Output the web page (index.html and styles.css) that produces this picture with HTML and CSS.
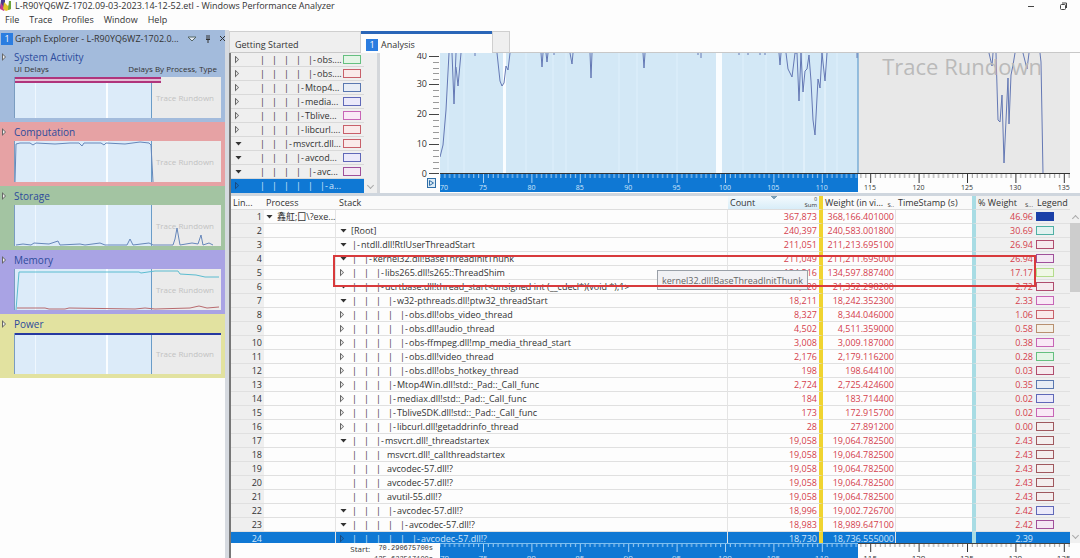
FILE: index.html
```html
<!DOCTYPE html>
<html lang="en">
<head>
<meta charset="utf-8">
<title>Windows Performance Analyzer</title>
<link rel="stylesheet" href="styles.css">
</head>
<body>
<header class="titlebar">
  <svg class="logo" width="12" height="12" viewBox="0 0 12 12"><path d="M1 0h4v8H0z" fill="#4a3a8c"/><path d="M1 3l4 6-1 2-4-2z" fill="#c43a8e"/><path d="M4 2l4 4 3-4v7l-5 2-3-2z" fill="#e2c52c"/><path d="M9 1h2v8l-3 1z" fill="#6fa53a"/></svg>
  <h1>L-R90YQ6WZ-1702.09-03-2023.14-12-52.etl - Windows Performance Analyzer</h1>
  <button class="win" aria-label="Minimize"><svg width="8" height="8" viewBox="0 0 8 8"><path d="M1 4.500h6" stroke="#444"/></svg></button>
  <button class="win" aria-label="Restore"><svg width="9" height="9" viewBox="0 0 9 9" fill="none" stroke="#444"><rect x="1.500" y="2.500" width="5" height="5" rx="1"/><path d="M3 1h4.500v5"/></svg></button>
</header>
<nav class="menu"><button>File</button><button>Trace</button><button>Profiles</button><button>Window</button><button>Help</button></nav>
<main>
  <aside>
    <div class="explorer">
      <div class="panel-head"><b class="num">1</b><span class="name">Graph Explorer - L-R90YQ6WZ-1702.0...</span>
        <button aria-label="Menu"><svg width="10" height="6" viewBox="0 0 10 6"><path d="M1 1h8L5 5z" fill="#e4eaf2" stroke="#566"/></svg></button>
        <button aria-label="Pin"><svg width="6" height="8" viewBox="0 0 6 8" stroke="#333" fill="none"><path d="M2 0v4M4 0v4M1 4.500h4M3 5v3"/></svg></button>
        <button aria-label="Close"><svg width="7" height="7" viewBox="0 0 7 7"><path d="M1 1l5 5M6 1L1 6" stroke="#333"/></svg></button>
      </div>
      <section class="system">
        <h2><button class="tw" aria-label="Expand"></button>System Activity</h2>
        <p class="sub"><span>UI Delays</span><span>Delays By Process, Type</span></p>
        <div class="thumb"><span>Trace Rundown</span>
          <svg viewBox="0 0 206 41" preserveAspectRatio="none"><path d="M0 0h146v6H0z" fill="#e3bcd4" stroke="none"/><path d="M0 1h146M0 5h146" stroke="#b0347c" stroke-width="2"/></svg></div>
      </section>
      <section class="computation">
        <h2><button class="tw" aria-label="Expand"></button>Computation</h2>
        <div class="thumb"><span>Trace Rundown</span>
          <svg viewBox="0 0 206 41" preserveAspectRatio="none"><path d="M0 41L1 3L5 2L15 2L18 4L21 2L40 3L55 2L64 2L67 5L69 2L86 2L89 4L91 2L110 3L125 1L134 2L136 4L138 41"/></svg></div>
      </section>
      <section class="storage">
        <h2><button class="tw" aria-label="Expand"></button>Storage</h2>
        <div class="thumb"><span>Trace Rundown</span>
          <svg viewBox="0 0 206 41" preserveAspectRatio="none"><path d="M1 40L8 39L16 40L19 38L34 39L43 36L45 40L65 39L70 40L85 38L90 40L112 40L115 34L118 40L134 38L138 40L158 40L160 34L162 23L165 40L177 38L183 39L186 30L188 40L194 38L198 40"/></svg></div>
      </section>
      <section class="memory">
        <h2><button class="tw" aria-label="Expand"></button>Memory</h2>
        <div class="thumb"><span>Trace Rundown</span>
          <svg viewBox="0 0 206 41" preserveAspectRatio="none"><path d="M1 41L4 3L124 3L126 4L140 2L163 2L165 5L181 6L190 8L204 8" stroke="#5bbcd0"/><path d="M2 39L30 39L34 40L50 40L54 39L120 40L130 39L140 40L175 39L184 37L192 39L204 38" stroke="#b86a6e"/></svg></div>
      </section>
      <section class="power">
        <h2><button class="tw" aria-label="Expand"></button>Power</h2>
        <div class="thumb"><span>Trace Rundown</span>
          <svg viewBox="0 0 206 41" preserveAspectRatio="none"><path d="M0 1h206" stroke="#2638a0" stroke-width="2"/></svg></div>
      </section>
    </div>
  </aside>
  <div class="workspace">
    <div class="tabs" role="tablist"><button role="tab">Getting Started</button><button role="tab" class="active"><b class="num">1</b>Analysis</button><button role="tab" class="stub" aria-label="New tab"></button></div>
    <div class="view">
      <div class="graph">
        <ul class="tree">
          <li><button class="tw" aria-label="Expand"></button><span class="st"><i>|</i><i>|</i><i>|</i><i>|</i><em>|-</em>obs....</span><span class="sw green"></span></li>
          <li><button class="tw" aria-label="Expand"></button><span class="st"><i>|</i><i>|</i><i>|</i><i>|</i><em>|-</em>obs....</span><span class="sw red"></span></li>
          <li><button class="tw" aria-label="Expand"></button><span class="st"><i>|</i><i>|</i><i>|</i><em>|-</em>Mtop4...</span><span class="sw blue"></span></li>
          <li><button class="tw" aria-label="Expand"></button><span class="st"><i>|</i><i>|</i><i>|</i><em>|-</em>media...</span><span class="sw indigo"></span></li>
          <li><button class="tw" aria-label="Expand"></button><span class="st"><i>|</i><i>|</i><i>|</i><em>|-</em>Tblive...</span><span class="sw pink"></span></li>
          <li><button class="tw" aria-label="Expand"></button><span class="st"><i>|</i><i>|</i><i>|</i><em>|-</em>libcurl....</span><span class="sw red"></span></li>
          <li><button class="tw open" aria-label="Collapse"></button><span class="st"><i>|</i><i>|</i><em>|-</em>msvcrt.dll...</span><span class="sw red"></span></li>
          <li><button class="tw open" aria-label="Collapse"></button><span class="st"><i>|</i><i>|</i><i>|</i><em>|-</em>avcod...</span><span class="sw indigo"></span></li>
          <li><button class="tw open" aria-label="Collapse"></button><span class="st"><i>|</i><i>|</i><i>|</i><i>|</i><em>|-</em>avc...</span><span class="sw purple"></span></li>
          <li class="sel"><button class="tw" aria-label="Expand"></button><span class="st"><i>|</i><i>|</i><i>|</i><i>|</i><i>|</i><em>|-</em>a...</span><span class="sw none"></span></li>
        </ul>
        <div class="tree-scroll"><span class="chev down"></span></div>
        <div class="chart">
          <div class="axis">
            <div class="labels"><span>40</span><span>30</span><span>20</span><span>10</span><span>0</span></div>
            <svg width="11" height="121" viewBox="0 0 11 121"><path d="M0 3.500h10M0 31.500h10M0 61.500h10M0 91.500h10M0 120.500h10" stroke="#444"/><path d="M4 9.500h6M4 15.500h6M4 20.500h6M4 26.500h6M4 37.500h6M4 43.500h6M4 49.500h6M4 55.500h6M4 67.500h6M4 73.500h6M4 79.500h6M4 85.500h6M4 97.500h6M4 103.500h6M4 109.500h6M4 115.500h6" stroke="#999"/></svg>
            <button class="zoomer" aria-label="Zoom"><svg width="9" height="10" viewBox="0 0 9 10" fill="none" stroke="#2f6ea8"><rect x=".5" y=".5" width="8" height="9" fill="#dcebf5"/><path d="M2.500 2.500l4 2.500-4 2.500z"/></svg></button>
          </div>
          <div class="plot-col">
            <div class="plot">
              <svg viewBox="0 0 630 121" preserveAspectRatio="none">
                <rect width="418" height="121" fill="#d3e8f6"/>
                <path d="M8 0v121M24 0v121M86 0v121M113 0v121M126 0v121M179 0v121M197 0v121M237 0v121M303 0v121M326 0v121M343 0v121M397 0v121" stroke="#d9ecf9" stroke-width="2"/>
                <path d="M364 0v121M385 0v121" stroke="#edf7fe"/>
                <path d="M63 0h3v121h-3zM276 0h6v121h-6z" fill="#fafdff"/>
                <rect x="418" width="212" height="121" fill="#e8e8e8"/>
                <path d="M418 0v121" stroke="#4a90c8"/>
                <path class="line" d="M0 104L3 92L6 57L9 0M12 0L14 51L16 0M16 14L18 33L21 0M35 0v3M57 0L60 28L62 33L64 30L66 13L68 17L70 0M101 0l1 14l1-14M106 0l1 9l1-9M114 0v2M130 0l2 11l1-11M150 0l1 25l1-25M203 0l1 15l1-15M258 0v2M261 0v5M299 0v2M308 0v2M320 0v2M325 0v2M339 0l1 12l1-12M346 0L348 16L352 24L355 0L357 0L359 48L361 0L363 39L365 18L367 16L369 2L371 28L373 67L375 82L378 26L380 35L382 0L385 28L387 0M417 0v5M549 0L552 13L553 0M556 0L558 67L560 69L562 42L564 110L568 25L569 71L571 22L573 12L575 0M583 0L587 16L589 0M600 0L601 9L603 121"/>
                <path d="M0 120.500h630" stroke="#333"/>
              </svg>
              <span class="rundown">Trace Rundown</span>
            </div>
            <div class="ruler">
              <svg viewBox="0 0 630 18" preserveAspectRatio="none"><defs><pattern id="tickw" x="43" width="48.400" height="18" patternUnits="userSpaceOnUse"><path d="M.5 0v9M5.300 0v4M10.200 0v4M15 0v4M19.900 0v4M24.700 0v4M29.500 0v4M34.400 0v4M39.200 0v4M44.100 0v4" stroke="#a9d2f5"/></pattern><pattern id="tickd" x="43" width="48.400" height="18" patternUnits="userSpaceOnUse"><path d="M.5 0v9" stroke="#333"/><path d="M5.300 0v4M10.200 0v4M15 0v4M19.900 0v4M24.700 0v4M29.500 0v4M34.400 0v4M39.200 0v4M44.100 0v4" stroke="#999"/></pattern></defs><rect class="bg" width="418" height="18"/><rect width="418" height="18" fill="url(#tickw)"/><rect x="418" width="212" height="18" fill="url(#tickd)"/></svg>
              <div class="scale"><span class="first">70</span><span>75</span><span>80</span><span>85</span><span>90</span><span>95</span><span>100</span><span>105</span><span>110</span><span class="out">115</span><span class="out">120</span><span class="out">125</span><span class="out">130</span><span class="out">135</span></div>
            </div>
          </div>
          <div class="gutter"></div>
        </div>
      </div>
      <div class="grid-wrap">
        <table>
          <colgroup><col class="c-line"><col class="c-proc"><col><col class="c-count"><col class="c-weight"><col class="c-time"><col class="c-pct"><col class="c-leg"></colgroup>
          <thead><tr><th>Lin...</th><th>Process</th><th>Stack</th><th class="sorted"><div class="hd">Count<small class="agg"><span>0</span><span>Sum</span></small></div></th><th><div class="hd">Weight (in vi...<small>S..</small></div></th><th>TimeStamp (s)</th><th><div class="hd">% Weight<small>S...</small></div></th><th>Legend</th></tr></thead>
          <tbody>
          <tr><td>1</td><td><div class="st"><button class="tw open" aria-label="Collapse"></button>鑫舡;囗\?exe...</div></td><td></td><td>367,873</td><td>368,166.401000</td><td></td><td>46.96</td><td><span class="sw solid"></span></td></tr>
          <tr><td>2</td><td></td><td><div class="st"><button class="tw open" aria-label="Collapse"></button>[Root]</div></td><td>240,397</td><td>240,583.001800</td><td></td><td>30.69</td><td><span class="sw teal"></span></td></tr>
          <tr><td>3</td><td></td><td><div class="st"><button class="tw open" aria-label="Collapse"></button><em>|-</em>ntdll.dll!RtlUserThreadStart</div></td><td>211,051</td><td>211,213.695100</td><td></td><td>26.94</td><td><span class="sw rose"></span></td></tr>
          <tr><td>4</td><td></td><td><div class="st"><button class="tw open" aria-label="Collapse"></button><i>|</i><em>|-</em>kernel32.dll!BaseThreadInitThunk</div></td><td>211,049</td><td>211,211.695000</td><td></td><td>26.94</td><td><span class="sw purple"></span></td></tr>
          <tr><td>5</td><td></td><td><div class="st"><button class="tw" aria-label="Expand"></button><i>|</i><i>|</i><em>|-</em>libs265.dll!s265::ThreadShim</div></td><td>134,516</td><td>134,597.887400</td><td></td><td>17.17</td><td><span class="sw lime"></span></td></tr>
          <tr><td>6</td><td></td><td><div class="st"><button class="tw open" aria-label="Collapse"></button><i>|</i><i>|</i><em>|-</em>ucrtbase.dll!thread_start&lt;unsigned int (__cdecl*)(void *),1&gt;</div></td><td>21,320</td><td>21,352.298200</td><td></td><td>2.72</td><td><span class="sw rose"></span></td></tr>
          <tr><td>7</td><td></td><td><div class="st"><button class="tw open" aria-label="Collapse"></button><i>|</i><i>|</i><i>|</i><em>|-</em>w32-pthreads.dll!ptw32_threadStart</div></td><td>18,211</td><td>18,242.352300</td><td></td><td>2.33</td><td><span class="sw pink"></span></td></tr>
          <tr><td>8</td><td></td><td><div class="st"><button class="tw" aria-label="Expand"></button><i>|</i><i>|</i><i>|</i><i>|</i><em>|-</em>obs.dll!obs_video_thread</div></td><td>8,327</td><td>8,344.046000</td><td></td><td>1.06</td><td><span class="sw red"></span></td></tr>
          <tr><td>9</td><td></td><td><div class="st"><button class="tw" aria-label="Expand"></button><i>|</i><i>|</i><i>|</i><i>|</i><em>|-</em>obs.dll!audio_thread</div></td><td>4,502</td><td>4,511.359000</td><td></td><td>0.58</td><td><span class="sw tan"></span></td></tr>
          <tr><td>10</td><td></td><td><div class="st"><button class="tw" aria-label="Expand"></button><i>|</i><i>|</i><i>|</i><i>|</i><em>|-</em>obs-ffmpeg.dll!mp_media_thread_start</div></td><td>3,008</td><td>3,009.187000</td><td></td><td>0.38</td><td><span class="sw pink"></span></td></tr>
          <tr><td>11</td><td></td><td><div class="st"><button class="tw" aria-label="Expand"></button><i>|</i><i>|</i><i>|</i><i>|</i><em>|-</em>obs.dll!video_thread</div></td><td>2,176</td><td>2,179.116200</td><td></td><td>0.28</td><td><span class="sw green"></span></td></tr>
          <tr><td>12</td><td></td><td><div class="st"><button class="tw" aria-label="Expand"></button><i>|</i><i>|</i><i>|</i><i>|</i><em>|-</em>obs.dll!obs_hotkey_thread</div></td><td>198</td><td>198.644100</td><td></td><td>0.03</td><td><span class="sw rose"></span></td></tr>
          <tr><td>13</td><td></td><td><div class="st"><button class="tw" aria-label="Expand"></button><i>|</i><i>|</i><i>|</i><em>|-</em>Mtop4Win.dll!std::_Pad::_Call_func</div></td><td>2,724</td><td>2,725.424600</td><td></td><td>0.35</td><td><span class="sw blue"></span></td></tr>
          <tr><td>14</td><td></td><td><div class="st"><button class="tw" aria-label="Expand"></button><i>|</i><i>|</i><i>|</i><em>|-</em>mediax.dll!std::_Pad::_Call_func</div></td><td>184</td><td>183.714400</td><td></td><td>0.02</td><td><span class="sw indigo"></span></td></tr>
          <tr><td>15</td><td></td><td><div class="st"><button class="tw" aria-label="Expand"></button><i>|</i><i>|</i><i>|</i><em>|-</em>TbliveSDK.dll!std::_Pad::_Call_func</div></td><td>173</td><td>172.915700</td><td></td><td>0.02</td><td><span class="sw pink"></span></td></tr>
          <tr><td>16</td><td></td><td><div class="st"><button class="tw" aria-label="Expand"></button><i>|</i><i>|</i><i>|</i><em>|-</em>libcurl.dll!getaddrinfo_thread</div></td><td>28</td><td>27.891200</td><td></td><td>0.00</td><td><span class="sw brown"></span></td></tr>
          <tr><td>17</td><td></td><td><div class="st"><button class="tw open" aria-label="Collapse"></button><i>|</i><i>|</i><em>|-</em>msvcrt.dll!_threadstartex</div></td><td>19,058</td><td>19,064.782500</td><td></td><td>2.43</td><td><span class="sw brown"></span></td></tr>
          <tr><td>18</td><td></td><td><div class="st leaf"><i>|</i><i>|</i><i>|</i>msvcrt.dll!_callthreadstartex</div></td><td>19,058</td><td>19,064.782500</td><td></td><td>2.43</td><td><span class="sw brown"></span></td></tr>
          <tr><td>19</td><td></td><td><div class="st leaf"><i>|</i><i>|</i><i>|</i>avcodec-57.dll!?</div></td><td>19,058</td><td>19,064.782500</td><td></td><td>2.43</td><td><span class="sw brown"></span></td></tr>
          <tr><td>20</td><td></td><td><div class="st leaf"><i>|</i><i>|</i><i>|</i>avcodec-57.dll!?</div></td><td>19,058</td><td>19,064.782500</td><td></td><td>2.43</td><td><span class="sw brown"></span></td></tr>
          <tr><td>21</td><td></td><td><div class="st leaf"><i>|</i><i>|</i><i>|</i>avutil-55.dll!?</div></td><td>19,058</td><td>19,064.782500</td><td></td><td>2.43</td><td><span class="sw brown"></span></td></tr>
          <tr><td>22</td><td></td><td><div class="st"><button class="tw open" aria-label="Collapse"></button><i>|</i><i>|</i><i>|</i><em>|-</em>avcodec-57.dll!?</div></td><td>18,996</td><td>19,002.726700</td><td></td><td>2.42</td><td><span class="sw indigo"></span></td></tr>
          <tr><td>23</td><td></td><td><div class="st"><button class="tw open" aria-label="Collapse"></button><i>|</i><i>|</i><i>|</i><i>|</i><em>|-</em>avcodec-57.dll!?</div></td><td>18,983</td><td>18,989.647100</td><td></td><td>2.42</td><td><span class="sw purple"></span></td></tr>
          <tr class="sel"><td>24</td><td></td><td><div class="st"><button class="tw" aria-label="Expand"></button><i>|</i><i>|</i><i>|</i><i>|</i><i>|</i><em>|-</em>avcodec-57.dll!?</div></td><td>18,730</td><td>18,736.555000</td><td></td><td>2.39</td><td></td></tr>
          </tbody>
        </table>
        <div class="scroll"><span class="chev up"></span><span class="bar"></span><span class="chev down"></span></div>
        <div class="tip" role="tooltip">kernel32.dll!BaseThreadInitThunk</div>
        <div class="mark"></div>
      </div>
      <div class="footer">
        <div class="range"><span>Start:</span><code>70.290675700s</code><span>End:</span><code>135.622517100s</code></div>
        <div class="ruler"><svg viewBox="0 0 630 18" preserveAspectRatio="none"><rect class="bg" width="418" height="18"/><rect width="418" height="18" fill="url(#tickw)"/><path d="M0 .5h418" stroke="#7fc0f0"/><rect x="418" width="212" height="18" fill="url(#tickd)"/><path d="M418 .5h212" stroke="#444"/></svg>
          <div class="scale"><span class="first">70</span><span>75</span><span>80</span><span>85</span><span>90</span><span>95</span><span>100</span><span>105</span><span>110</span><span class="out">115</span><span class="out">120</span><span class="out">125</span><span class="out">130</span><span class="out">135</span></div></div>
        <div class="gutter"></div>
      </div>
    </div>
  </div>
</main>
</body>
</html>
```
FILE: styles.css
```css
* { box-sizing: border-box; }
body { margin: 0; height: 100vh; overflow: hidden; display: flex; flex-direction: column; background: #fdfdfd; color: #333; font: 9px/14px "Open Sans", "Noto Sans CJK SC", sans-serif; white-space: nowrap; }
button { border: 0; padding: 0; margin: 0; background: none; color: inherit; font: inherit; display: inline-flex; align-items: center; }
h1, h2, p, ul { margin: 0; padding: 0; font-weight: 400; font-size: 9px; }
.titlebar { display: flex; align-items: center; height: 12px; flex: none; padding-right: 12px; gap: 24px; }
.titlebar .logo { margin-right: -21px; }
.titlebar h1 { flex: 1; line-height: 12px; }
.win svg { display: block; }
.menu { display: flex; flex: none; height: 18px; padding-left: 5px; gap: 10px; line-height: 16px; align-items: flex-start; }
main { flex: 1; min-height: 0; display: flex; }
aside { width: 229px; flex: none; background: #fdfdfd; border-right: 4px solid #d6dae0; }
.explorer { background: #a3bbdc; }
.panel-head { display: flex; align-items: center; height: 18px; gap: 8px; padding: 0 4px 1px 1px; }
.panel-head .name { flex: 1; margin-left: -6px; }
.num { width: 12px; height: 12px; background: #2b7de0; color: #fff; font-weight: 400; font-size: 9px; line-height: 12px; text-align: center; flex: none; }
section { height: 64px; padding: 3px 4px 4px 14px; }
section.system { height: 74px; padding-top: 2px; }
section h2 { color: #2d4b9c; font-size: 10px; line-height: 14px; margin-bottom: 2px; display: flex; align-items: center; margin-left: -14px; }
.system h2 { margin-bottom: 0; }
section .tw { margin-left: 2px; width: 12px; }
.sub { display: flex; justify-content: space-between; line-height: 10px; font-size: 8px; padding-right: 4px; margin-bottom: 3px; }
.computation { background: #e6a2a4; }
.storage { background: #a3c4a2; }
.memory { background: #a9a3e4; }
.power { background: #e2e2a0; }
.thumb { position: relative; height: 41px; background: linear-gradient(90deg, #dcebf9 0 9.500%, #eff7fe 9.500% 10%, #dcebf9 10% 44%, #fafdff 44% 45%, #dcebf9 45% 66.200%, #6a9cc8 66.200% 66.700%, #ebebeb 66.700%); border-left: 1px solid #7a9cc0; display: flex; justify-content: flex-end; align-items: center; padding-right: 7px; color: #c2c2c2; font-size: 8px; }
.thumb svg { position: absolute; inset: 0; width: 100%; height: 100%; fill: none; stroke: #6687ba; }
.tw { width: 8px; height: 12px; flex: none; position: relative; }
.tw::before { content: ""; width: 4px; height: 8px; background: #666; clip-path: polygon(0 0, 100% 50%, 0 100%); }
.tw::after { content: ""; position: absolute; left: 1px; width: 2px; height: 4px; background: #eee; clip-path: polygon(0 0, 100% 50%, 0 100%); }
.tw.open::before { width: 7px; height: 4px; background: #333; clip-path: polygon(0 0, 100% 0, 50% 100%); }
.tw.open::after { display: none; }
.workspace { flex: 1; min-width: 0; display: flex; flex-direction: column; }
.tabs { display: flex; height: 23px; flex: none; border-bottom: 1px solid #c8c8c8; padding-top: 1px; }
.tabs button { width: 132px; background: #efefef; border: 1px solid #cfcfcf; border-bottom: 0; padding: 5px 5px 0; gap: 3px; }
.tabs .active { width: 131px; background: #fdfdfd; border: 0; border-top: 3px solid #2a66b8; height: 23px; padding-top: 2px; }
.tabs .stub { width: 18px; }
.view { flex: 1; min-height: 0; display: flex; flex-direction: column; border-left: 2px solid #777; }
.graph { display: flex; flex: none; border-bottom: 3px solid #cfd6de; height: 143px; }
.tree { width: 133px; flex: none; list-style: none; background: #efefef; }
.tree li { display: flex; align-items: center; height: 14px; border-bottom: 1px solid #d9d9d9; padding: 0 3px 0 4px; }
.tree .st { flex: 1; min-width: 0; padding-left: 16px; }
.tree .sel { background: #0f78d4; color: #cfe6fb; border-color: #0f78d4; }
.st { display: flex; align-items: center; height: 13px; }
.st i, .st em { font-style: normal; width: 12px; flex: none; padding-left: 1px; }
.st em { width: 10px; }
.st .tw { margin-right: 4px; }
td .st .tw { margin-right: 3px; }
td .st.leaf { padding-left: 11px; }
.sel .tw::before { background: #1a4a80; }
.sel .tw::after { background: #0f78d4; }
.sw { display: block; flex: none; width: 18px; height: 9px; border: 1px solid; }
.green { color: #65c080; background: #e4f5e6; }
.red { color: #c8606a; background: #faeaea; }
.blue { color: #5a78b0; background: #e8edf5; }
.indigo { color: #6068b8; background: #ebe9fa; }
.pink { color: #c765b6; background: #f9e9f6; }
.purple { color: #a0509a; background: #f4e8f4; }
.teal { color: #4fb0a4; background: #e2f2f0; }
.rose { color: #b04c6e; background: #f6eaee; }
.lime { color: #b4dc8c; background: #f0f8e6; }
.tan { color: #b89070; background: #f4efe6; }
.brown { color: #a0585e; background: #f4eeee; }
.solid { color: #1c40a8; background: #1c40a8; }
.sw.none { visibility: hidden; }
.tree-scroll { width: 16px; flex: none; background: #efefef; border-right: 3px solid #d4d7db; display: flex; align-items: flex-end; justify-content: center; padding-bottom: 5px; }
.chev { width: 5px; height: 5px; border: solid #aaa; border-width: 0 1px 1px 0; transform: rotate(45deg); }
.chev.up { transform: rotate(225deg); }
.chart { flex: 1; min-width: 0; display: flex; overflow: hidden; }
.axis { width: 60px; flex: none; display: grid; grid-template-columns: 1fr 11px; grid-template-rows: 121px 18px; column-gap: 2px; }
.labels { display: grid; grid-template-rows: 10px 28px 30px 30px 30px; text-align: right; }
.labels span { line-height: 14px; align-self: end; }
.zoomer { grid-column: 1 / 3; justify-self: end; padding-right: 4px; }
.plot-col { flex: 1; min-width: 0; }
.plot { position: relative; height: 121px; }
.plot svg, .ruler svg { display: block; width: 100%; height: 100%; }
.line { fill: none; stroke: #6478b4; }
.rundown { position: absolute; right: 28px; top: 0; font-size: 22px; line-height: 26px; color: #bababa; }
.ruler { position: relative; height: 18px; overflow: hidden; }
.ruler .bg { fill: #0f78d4; }
.scale { position: absolute; inset: 9px 0 auto; display: flex; font-size: 7px; line-height: 9px; text-align: center; color: #cfe6fb; }
.scale span { width: 7.683%; flex: none; }
.scale .first { width: 2.984%; text-align: left; }
.scale .out { color: #333; }
.gutter { width: 10px; flex: none; }
.grid-wrap { position: relative; flex: none; display: flex; height: 347px; overflow: hidden; }
table { flex: 1; min-width: 0; width: 100%; height: 350px; table-layout: fixed; border-spacing: 0; }
.c-line { width: 33px; } .c-proc { width: 72px; } .c-count { width: 95px; } .c-weight { width: 73px; } .c-time { width: 76px; } .c-pct { width: 63px; } .c-leg { width: 35px; }
th { height: 14px; padding: 0 2px; font-weight: 400; text-align: left; background: #fafafa; line-height: 13px; border-bottom: 1px solid #ddd; }
th:nth-child(3) { padding-left: 3px; }
th:nth-child(8) { padding: 0 0 0 2px; }
.hd { display: flex; justify-content: space-between; height: 13px; }
th small { font-size: 6px; line-height: 18px; }
.agg { display: flex; flex-direction: column; text-align: right; }
th .agg span { line-height: 6px; }
th .agg span:first-child { font-size: 5px; }
.sorted { background: conic-gradient(from -45deg at 50% 3px, #7aa0b8 90deg, transparent 0) 50% 0 / 6px 3px no-repeat, linear-gradient(#f4fafd, #d8edf8); }
td { height: 14px; padding: 0 2px; line-height: 13px; border-bottom: 1px solid #e0e0e0; }
td:nth-child(1) { text-align: right; background: #efefef; }
td:nth-child(2), td:nth-child(3), td:nth-child(5) { border-right: 1px solid #e4e4e4; }
td:nth-child(3) { padding-left: 4px; }
td:nth-child(4), td:nth-child(5), td:nth-child(7) { text-align: right; color: #d4404c; }
td:nth-child(5) { padding-right: 1px; }
th:nth-child(4), td:nth-child(4) { border-right: 4px solid #f0d430; }
th:nth-child(7), td:nth-child(7) { border-left: 4px solid #a8dce4; }
td:nth-child(7), td:nth-child(8), th:nth-child(7), th:nth-child(8) { background: #f0f0f0; }
td:nth-child(8) { padding-left: 1px; }
tbody .sel td { background: #0f78d4; color: #cfe6fb; border-bottom-color: #0f78d4; }
.scroll { width: 10px; flex: none; background: #f0f0f0; display: flex; flex-direction: column; align-items: center; padding: 20px 0 5px; }
.scroll .bar { width: 100%; height: 69px; background: #cdcdcd; margin: 2px 0 auto; }
.tip { position: absolute; left: 426px; top: 74px; padding: 3px 4px 2px; background: #f1f1f4; border: 1px solid #9aa0a8; line-height: 13px; color: #666; }
.mark { position: absolute; left: 102px; right: 44px; top: 59px; height: 32px; border: 2px solid #d83a3c; }
.footer { flex: 1; min-height: 0; overflow: hidden; display: flex; background: #fdfdfd; }
.range { width: 209px; flex: none; padding-right: 7px; display: grid; grid-template-columns: 1fr auto; column-gap: 4px; align-content: start; justify-items: end; font-size: 8px; line-height: 11px; }
.range code { font-family: "Liberation Mono", monospace; font-size: 7px; }
.footer .ruler { flex: 1; min-width: 0; }
.footer .scale { top: 10px; font-size: 8px; }
```
